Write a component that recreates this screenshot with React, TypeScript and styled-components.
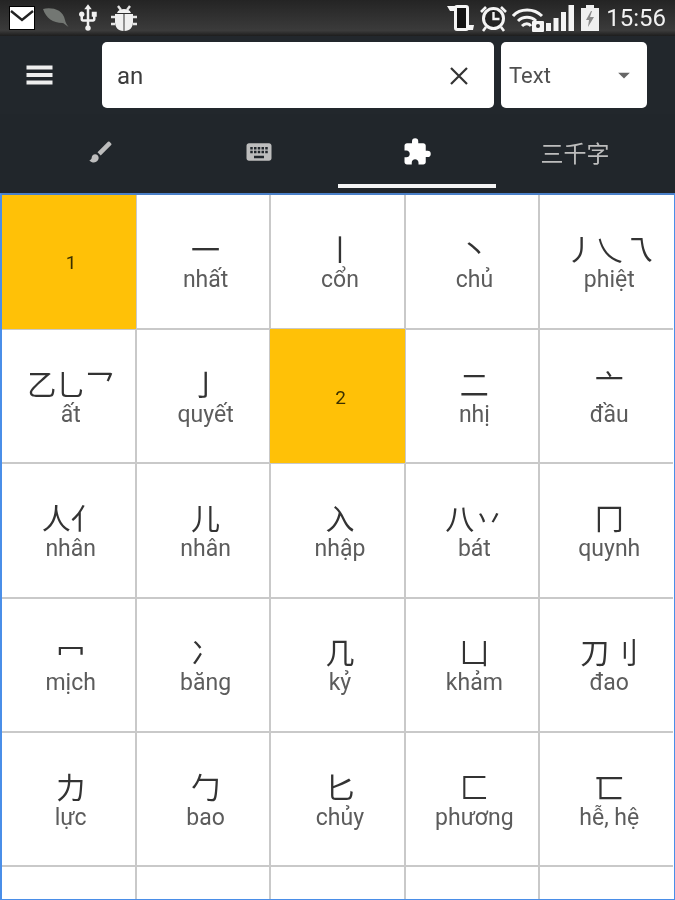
import React from "react";
import styled, { createGlobalStyle } from "styled-components";
import { MdBrush, MdKeyboard, MdExtension, MdArrowDropDown, MdUsb } from "react-icons/md";

const Global = createGlobalStyle`
  html, body { margin: 0; padding: 0; background: #fff; }
  #root { width: 675px; height: 900px; }
  * { box-sizing: border-box; }
`;

const Page = styled.div`
  width: 675px;
  height: 900px;
  overflow: hidden;
  display: flex;
  flex-direction: column;
  font-family: Roboto, "Noto Sans CJK SC", sans-serif;
  background: #fff;
  filter: blur(0.35px);
`;

const StatusBar = styled.div`
  height: 36px;
  flex: none;
  display: flex;
  align-items: center;
  justify-content: space-between;
  padding: 0 9px;
  background: linear-gradient(#242424, #3b3b3b 85%, #1d1d1d);
`;

const StatusGroup = styled.div`
  display: flex;
  align-items: center;
`;

const Clock = styled.span`
  color: #f2f2f2;
  font-size: 24px;
  line-height: 36px;
  margin-left: 7px;
`;

const Toolbar = styled.div`
  height: 78px;
  flex: none;
  display: flex;
  align-items: flex-start;
  padding-top: 6px;
  background: #22272c;
`;

const MenuButton = styled.div`
  width: 102px;
  height: 66px;
  flex: none;
  display: flex;
  align-items: center;
  justify-content: center;
  padding-right: 24px;
`;

const SearchBox = styled.div`
  width: 392px;
  height: 66px;
  flex: none;
  border-radius: 5px;
  background: #fff;
  display: flex;
  align-items: center;
  justify-content: space-between;
  padding: 1px 26px 0 15px;
  color: #3c3c3c;
  font-size: 24px;
`;

const Select = styled.div`
  width: 146px;
  height: 66px;
  flex: none;
  margin-left: 7px;
  border-radius: 5px;
  background: #fff;
  display: flex;
  align-items: center;
  justify-content: space-between;
  padding: 0 9px 0 8px;
  color: #505050;
  font-size: 22px;
`;

const Tabs = styled.div`
  height: 79px;
  flex: none;
  display: grid;
  grid-template-columns: repeat(4, 158px);
  padding-left: 22px;
  background: #21262b;
`;

const Tab = styled.div<{ $active?: boolean }>`
  display: flex;
  align-items: center;
  justify-content: center;
  height: 74px;
  padding-top: 6px;
  color: ${(p) => (p.$active ? "#fff" : "#bdbdbd")};
  border-bottom: 4px solid ${(p) => (p.$active ? "#f4f4f4" : "transparent")};
  font-size: 23px;
`;

const GridFrame = styled.div`
  flex: 1;
  min-height: 0;
  overflow: hidden;
  border: 1px solid #4a8ee8;
  border-left-width: 2px;
  border-top: 2px solid #4a80c8;
`;

const Grid = styled.div`
  display: grid;
  grid-template-columns: repeat(5, 134.4px);
  grid-auto-rows: 134.4px;
  margin: -0.5px 0 0 -0.5px;
`;

const Cell = styled.div`
  display: flex;
  flex-direction: column;
  align-items: center;
  justify-content: center;
  border: 1px solid #c9c9c9;
  padding: 4px 0 0 5px;
  &:nth-child(5n + 1) { border-left: none; }
  &:nth-child(5n) { border-right: none; }
  &:nth-child(-n + 5) { border-top: none; }
`;

const Stroke = styled(Cell)`
  background: #ffc107;
  border-color: #ffc107;
  color: #3a3000;
  font-size: 19px;
  padding: 2px 0 0 6px;
`;

const Glyphs = styled.div`
  display: flex;
  height: 32px;
  line-height: 32px;
  font-size: 29px;
  color: #333;
  font-family: "Noto Sans CJK SC", sans-serif;
`;

const Reading = styled.div`
  height: 31px;
  line-height: 31px;
  font-size: 23px;
  color: #5c5c5c;
`;

const Mail = () => (
  <svg width="26" height="24" viewBox="0 0 26 24">
    <rect x="0.5" y="0.5" width="25" height="23" fill="#fff" stroke="#000" />
    <path d="M2 5l11 9 11-9" fill="none" stroke="#222" strokeWidth="2.4" />
  </svg>
);

const Leaf = () => (
  <svg width="26" height="20" viewBox="0 0 26 20" style={{ marginLeft: 8 }}>
    <path d="M0 1C8-1 20 1 22 12c.3 2 1.500 4 3.500 7-3-2-5-4-6-4C10 15 3 10 0 1z" fill="#737773" />
  </svg>
);

const Usb = () => <MdUsb size={30} color="#f0f0f0" style={{ margin: "0 4px" }} />;

const Bug = () => (
  <svg width="26" height="27" viewBox="0 0 26 27" style={{ marginLeft: 4 }}>
    <path d="M7 1l3 4M19 1l-3 4M0 12h4M26 12h-4M0 19h4M26 19h-4" stroke="#e6e6e6" strokeWidth="2.400" />
    <path d="M6 8c1-3 4-4 7-4s6 1 7 4z" fill="#f0f0f0" />
    <path d="M4 9h8.500v17C7 26 4 22 4 17zM22 9h-8.500v17c5.500 0 8.500-4 8.500-9z" fill="#f0f0f0" />
  </svg>
);

const Rotate = () => (
  <svg width="27" height="26" viewBox="0 0 27 26">
    <path d="M0 1h8v5H3z" fill="#f4f4f4" />
    <path d="M20 20h7l-1 5h-6z" fill="#f4f4f4" />
    <rect x="8.500" y="1.500" width="12" height="23" rx="1.500" fill="#111" stroke="#f4f4f4" strokeWidth="3" />
  </svg>
);

const Alarm = () => (
  <svg width="27" height="27" viewBox="0 0 27 27" style={{ marginLeft: 6 }}>
    <circle cx="13.500" cy="13.500" r="10" fill="#222" stroke="#f4f4f4" strokeWidth="3" />
    <path d="M13.500 7v7h6" fill="none" stroke="#f4f4f4" strokeWidth="2.400" />
    <path d="M1 7l5-5M26 7l-5-5M6 22l-3 4M21 22l3 4" stroke="#f4f4f4" strokeWidth="2.600" />
  </svg>
);

const Wifi = () => (
  <svg width="32" height="24" viewBox="0 0 32 24" style={{ marginLeft: 5, marginTop: 3 }}>
    <path d="M1 8C8 0 22 0 30 8M6 13c5-5 13-5 18 0M10 18c3-3 7-3 9 0" fill="none" stroke="#f4f4f4" strokeWidth="3" />
    <rect x="20" y="13" width="12" height="11" rx="1" fill="#f4f4f4" />
    <circle cx="26" cy="18" r="2" fill="#333" />
  </svg>
);

const Signal = () => (
  <svg width="28" height="26" viewBox="0 0 28 26" style={{ marginLeft: 2 }}>
    <path d="M0 18h5v8H0zM7.500 13h5v13h-5zM15 7h5v19h-5zM22.500 0h5.500v26h-5.500z" fill="#f4f4f4" />
  </svg>
);

const Battery = () => (
  <svg width="18" height="26" viewBox="0 0 18 26" style={{ marginLeft: 7 }}>
    <path d="M5 0h8v3h5v23H0V3h5z" fill="#f0f0f0" />
    <path d="M10 6l-5 9h3l-1 7 6-10h-4l2-6z" fill="#8a8a8a" />
  </svg>
);

const MenuIcon = () => (
  <svg width="27" height="20" viewBox="0 0 27 20">
    <path d="M0.500 0.500h26v4h-26zM0.500 8h26v4h-26zM0.500 15.500h26v4h-26z" fill="#eeeeee" />
  </svg>
);

const CloseIcon = () => (
  <svg width="18" height="18" viewBox="0 0 18 18">
    <path d="M1 1l16 16M17 1L1 17" stroke="#333" strokeWidth="2.200" />
  </svg>
);

const rows: { g?: string[]; r?: string; n?: string }[] = [
  { n: "1" },
  { g: ["一"], r: "nhất" },
  { g: ["丨"], r: "cổn" },
  { g: ["丶"], r: "chủ" },
  { g: ["丿", "乀", "乁"], r: "phiệt" },
  { g: ["乙", "乚", "乛"], r: "ất" },
  { g: ["亅"], r: "quyết" },
  { n: "2" },
  { g: ["二"], r: "nhị" },
  { g: ["亠"], r: "đầu" },
  { g: ["人", "亻"], r: "nhân" },
  { g: ["儿"], r: "nhân" },
  { g: ["入"], r: "nhập" },
  { g: ["八", "丷"], r: "bát" },
  { g: ["冂"], r: "quynh" },
  { g: ["冖"], r: "mịch" },
  { g: ["冫"], r: "băng" },
  { g: ["几"], r: "kỷ" },
  { g: ["凵"], r: "khảm" },
  { g: ["刀", "刂"], r: "đao" },
  { g: ["力"], r: "lực" },
  { g: ["勹"], r: "bao" },
  { g: ["匕"], r: "chủy" },
  { g: ["匚"], r: "phương" },
  { g: ["匸"], r: "hễ, hệ" },
  {}, {}, {}, {}, {},
];

export default function App() {
  return (
    <Page>
      <Global />
      <StatusBar>
        <StatusGroup>
          <Mail />
          <Leaf />
          <Usb />
          <Bug />
        </StatusGroup>
        <StatusGroup>
          <Rotate />
          <Alarm />
          <Wifi />
          <Signal />
          <Battery />
          <Clock>15:56</Clock>
        </StatusGroup>
      </StatusBar>
      <Toolbar>
        <MenuButton><MenuIcon /></MenuButton>
        <SearchBox>
          <span>an</span>
          <CloseIcon />
        </SearchBox>
        <Select>
          <span>Text</span>
          <MdArrowDropDown size={28} color="#666" />
        </Select>
      </Toolbar>
      <Tabs>
        <Tab><MdBrush size={28} /></Tab>
        <Tab><MdKeyboard size={30} /></Tab>
        <Tab $active><MdExtension size={30} /></Tab>
        <Tab>三千字</Tab>
      </Tabs>
      <GridFrame>
        <Grid>
          {rows.map((c, i) =>
            c.n ? (
              <Stroke key={i}>{c.n}</Stroke>
            ) : (
              <Cell key={i}>
                {c.g && <Glyphs>{c.g.map((x) => <span key={x}>{x}</span>)}</Glyphs>}
                {c.r && <Reading>{c.r}</Reading>}
              </Cell>
            )
          )}
        </Grid>
      </GridFrame>
    </Page>
  );
}
